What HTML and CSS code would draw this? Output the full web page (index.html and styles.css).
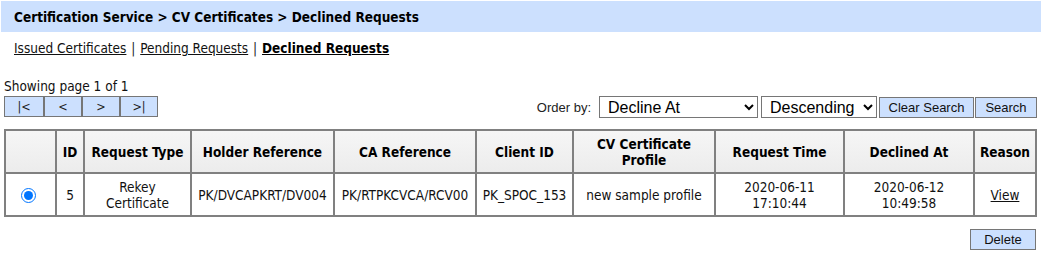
FILE: index.html
```html
<!DOCTYPE html>
<html>
<head>
<meta charset="utf-8">
<link rel="stylesheet" href="styles.css">
</head>
<body>
<div class="crumb">Certification Service &gt; CV Certificates &gt; Declined Requests</div>
<div class="tabs"><a href="#">Issued Certificates</a> | <a href="#">Pending Requests</a> | <a href="#" class="active">Declined Requests</a></div>
<div class="content">
  <div class="page-info">Showing page 1 of 1</div>
  <div class="toolbar">
    <div class="pager">
      <button class="pbtn">|&lt;</button><button class="pbtn">&lt;</button><button class="pbtn">&gt;</button><button class="pbtn">&gt;|</button>
    </div>
    <div class="order">
      <span class="order-label">Order by:</span>
      <select class="sel sel-field"><option>Decline At</option></select>
      <select class="sel sel-dir"><option>Descending</option></select>
      <button class="btn btn-clear">Clear Search</button>
      <button class="btn btn-search">Search</button>
    </div>
  </div>
  <table class="grid">
    <thead>
      <tr>
        <th class="c-sel"></th>
        <th class="c-id">ID</th>
        <th class="c-type">Request Type</th>
        <th class="c-holder">Holder Reference</th>
        <th class="c-ca">CA Reference</th>
        <th class="c-client">Client ID</th>
        <th class="c-profile">CV Certificate Profile</th>
        <th class="c-req">Request Time</th>
        <th class="c-dec">Declined At</th>
        <th class="c-reason">Reason</th>
      </tr>
    </thead>
    <tbody>
      <tr>
        <td><input type="radio" name="row" checked></td>
        <td>5</td>
        <td>Rekey<br>Certificate</td>
        <td>PK/DVCAPKRT/DV004</td>
        <td>PK/RTPKCVCA/RCV00</td>
        <td>PK_SPOC_153</td>
        <td>new sample profile</td>
        <td>2020-06-11<br>17:10:44</td>
        <td>2020-06-12<br>10:49:58</td>
        <td><a href="#">View</a></td>
      </tr>
    </tbody>
  </table>
  <div class="actions"><button class="btn btn-delete">Delete</button></div>
</div>
</body>
</html>
```
FILE: styles.css
```css
html, body {
  margin: 0;
  padding: 0;
  background: #fff;
}
body {
  font-family: "DejaVu Sans Condensed", Tahoma, "Liberation Sans", sans-serif;
  font-size: 13.5px;
  color: #111;
}
.crumb {
  margin: 1px 1px 0 1px;
  height: 31px;
  line-height: 32px;
  background: #cce0fe;
  padding-left: 13px;
  font-weight: bold;
  font-size: 13.5px;
  color: #000;
}
.tabs {
  padding: 7px 14px 0 14px;
  height: 18px;
  line-height: 19px;
  color: #222;
  word-spacing: 1px;
}
.tabs a {
  color: #111;
  text-decoration: underline;
  word-spacing: 0;
}
.tabs a.active {
  font-weight: bold;
  color: #000;
}
.content {
  padding: 0 5px 0 4px;
}
.page-info {
  margin-top: 19px;
  height: 20px;
  line-height: 20px;
}
.toolbar {
  display: flex;
  justify-content: space-between;
  align-items: center;
  height: 22px;
}
.pager {
  display: flex;
  align-self: flex-start;
}
.pbtn {
  width: 38px;
  height: 21px;
  margin: 0;
  padding: 0;
  background: #cce0fe;
  border: 1px solid #767676;
  font-family: "DejaVu Sans Condensed", Tahoma, "Liberation Sans", sans-serif;
  font-size: 12.5px;
  color: #222;
}
.pager .pbtn:first-child { width: 40px; }
.order {
  display: flex;
  align-items: center;
  gap: 3px;
  font-family: "Liberation Sans", Arial, sans-serif;
}
.order-label {
  font-size: 13px;
  margin-right: 5px;
  color: #222;
}
.sel {
  height: 22px;
  font-family: "Liberation Sans", Arial, sans-serif;
  font-size: 16px;
  border: 1px solid #767676;
  border-radius: 0;
  background: #fff;
  color: #000;
  padding: 0 0 0 4px;
}
.sel-field { width: 159px; }
.sel-dir { width: 116px; }
.btn {
  height: 21px;
  margin: 0;
  padding: 0;
  white-space: nowrap;
  background: #cce0fe;
  border: 1px solid #767676;
  font-family: "Liberation Sans", Arial, sans-serif;
  font-size: 13px;
  color: #111;
}
.btn-clear { width: 95px; margin-left: -1px; }
.btn-search { width: 62px; margin-left: -2px; }
.grid {
  margin-top: 11px;
  width: 1033px;
  table-layout: fixed;
  border-collapse: separate;
  border-spacing: 0;
  border: 1px solid #808080;
}
.grid th, .grid td {
  border: 1px solid #808080;
  padding: 0 4px;
  text-align: center;
  vertical-align: middle;
  overflow: hidden;
}
.grid th {
  height: 41px;
  font-weight: bold;
  font-size: 13.5px;
  color: #000;
  background: linear-gradient(#f6f6f6, #ececec);
  line-height: 16px;
}
.grid td {
  height: 41px;
  line-height: 16px;
  color: #111;
}
.grid td a { color: #111; }
.grid input[type=radio] {
  width: 15px;
  height: 15px;
  margin: 0 5px 0 0;
  vertical-align: middle;
}
.c-sel { width: 41px; }
.c-id { width: 18px; padding: 0 2px; }
.grid th.c-id { padding: 0 2px; width: 22px; }
.c-type { width: 97px; }
.c-holder { width: 133px; }
.c-ca { width: 132px; }
.c-client { width: 87px; }
.c-profile { width: 132px; }
.c-req { width: 119px; }
.c-dec { width: 120px; }
.c-reason { width: 52px; }
.actions {
  display: flex;
  justify-content: flex-end;
  margin-top: 12px;
  padding-right: 1px;
}
.btn-delete { width: 66px; }
```
